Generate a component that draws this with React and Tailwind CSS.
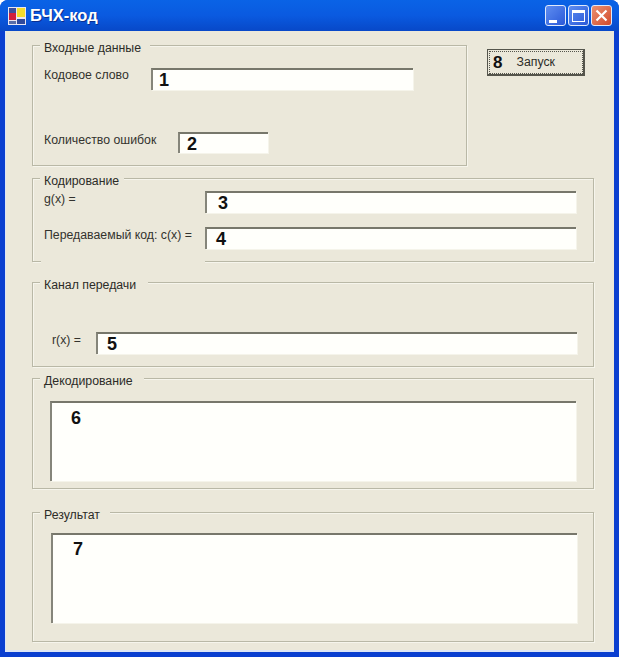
const font = { fontFamily: '"Liberation Sans", Arial, sans-serif' };

function GroupBox({ title, gap, className, children }) {
  return (
    <div className={`relative border border-[#b9b8a6] shadow-[1px_1px_0_#f6f5ec,inset_1px_1px_0_#f6f5ec] ${className}`}>
      <span className="absolute -top-[5px] left-[7px] bg-[#ebe8da] pl-1 text-[12.3px] leading-[15px] text-[#2c2c28]" style={{ width: gap }}>
        {title}
      </span>
      {children}
    </div>
  );
}

function Field({ value, className, numClass }) {
  return (
    <div className={`border-t-2 border-l-2 border-t-[#77776b] border-l-[#85857a] bg-[#fffffb] shadow-[1px_1px_0_#f5f4ea] text-[18px] leading-[20px] font-bold text-[#111] ${className}`}>
      <span className={`block ${numClass}`}>{value}</span>
    </div>
  );
}

function WinButton({ className, children }) {
  return (
    <div className={`flex h-[21px] w-[21px] items-center justify-center rounded-[3px] border border-[#dfe9fb] ${className}`}>
      {children}
    </div>
  );
}

export default function App() {
  return (
    <div className="h-[657px] w-[619px] overflow-hidden bg-white" style={font}>
      <div className="flex h-full flex-col rounded-t-[8px] bg-[#0a3fd0]">
        {/* title bar */}
        <div className="flex h-[31px] shrink-0 items-center rounded-t-[8px] bg-gradient-to-b from-[#0a63e6] via-[#0a5ae0] to-[#0848c8] pr-[7px] pl-[8px]">
          <svg width="18" height="18" viewBox="0 0 18 18" className="shrink-0">
            <rect x="0" y="0" width="18" height="18" fill="#e9e6f2" />
            <rect x="1" y="1" width="7" height="5" fill="#3a4f9c" />
            <rect x="9" y="1" width="8" height="9" fill="#f4dc2c" />
            <rect x="1" y="6" width="7" height="7" fill="#d21f3c" />
            <rect x="1" y="14" width="7" height="3" fill="#5a6ea8" />
            <rect x="9" y="12" width="8" height="5" fill="#2f4a9c" />
          </svg>
          <span className="ml-[4px] text-[16.5px] leading-none font-bold text-white [text-shadow:1px_1px_0_#0a2f90]">БЧХ-код</span>
          <div className="ml-auto flex gap-[2px]">
            <WinButton className="bg-gradient-to-br from-[#5f8df0] to-[#2b58d8]">
              <span className="mt-[11px] mr-[6px] h-[3px] w-[8px] bg-white" />
            </WinButton>
            <WinButton className="bg-gradient-to-br from-[#5f8df0] to-[#2b58d8]">
              <span className="h-[12px] w-[13px] border border-t-[3px] border-white" />
            </WinButton>
            <WinButton className="bg-gradient-to-br from-[#ea9070] to-[#d2492a]">
              <svg width="13" height="13" viewBox="0 0 13 13">
                <path d="M1.5 1.5 11.5 11.5M11.5 1.5 1.5 11.5" stroke="#fff" strokeWidth="2.2" />
              </svg>
            </WinButton>
          </div>
        </div>

        {/* client area */}
        <div className="mx-[5px] mb-[5px] flex flex-1 flex-col border-b-2 border-l border-[#dde6f6] bg-[#ebe8da] pt-[14px] pl-[26px]">
          <div className="flex items-start">
            <GroupBox title="Входные данные" gap={110} className="h-[121px] w-[435px] pt-[22px] pl-[11px]">
              <div className="flex items-start">
                <span className="w-[107px] text-[12.3px] leading-[15px] text-[#33332e]">Кодовое слово</span>
                <Field value="1" className="h-[22px] w-[262px]" numClass="pl-[6px]" />
              </div>
              <div className="mt-[42px] flex items-start">
                <span className="w-[134px] pt-[1px] text-[12.3px] leading-[15px] text-[#33332e]">Количество ошибок</span>
                <Field value="2" className="h-[21px] w-[90px]" numClass="pl-[7px]" />
              </div>
            </GroupBox>
            <button className="mt-[4px] ml-[20px] flex h-[27px] w-[98px] items-center border border-[#55554c] border-r-2 border-b-2 bg-[#ebe8da] pl-[5px] text-left outline-1 -outline-offset-3 outline-[#55554c] outline-dotted">
              <span className="text-[17px] leading-none font-bold text-[#111]">8</span>
              <span className="ml-[14px] text-[12.3px] leading-none text-[#2c2c28]">Запуск</span>
            </button>
          </div>

          <GroupBox title="Кодирование" gap={84} className="mt-[12px] h-[84px] w-[562px] pt-[12px] pl-[11px]">
            <div className="flex items-start">
              <span className="w-[161px] pt-[1px] text-[12.3px] leading-[15px] text-[#33332e]">g(x) =</span>
              <Field value="3" className="h-[22px] w-[371px]" numClass="pl-[11px]" />
            </div>
            <div className="mt-[14px] flex items-start">
              <span className="w-[161px] pt-[1px] text-[12.3px] leading-[15px] text-[#33332e]">Передаваемый код: c(x) =</span>
              <Field value="4" className="h-[22px] w-[371px]" numClass="pl-[9px]" />
            </div>
            <span className="absolute -bottom-[2px] left-[8px] h-[3px] w-[164px] bg-[#ebe8da]" />
          </GroupBox>

          <GroupBox title="Канал передачи" gap={108} className="mt-[20px] h-[85px] w-[562px] pt-[49px] pl-[18px]">
            <div className="flex items-start">
              <span className="w-[45px] pt-[1px] pl-[1px] text-[12.3px] leading-[15px] text-[#33332e]">r(x) =</span>
              <Field value="5" className="h-[22px] w-[481px]" numClass="pl-[9px]" />
            </div>
          </GroupBox>

          <GroupBox title="Декодирование" gap={104} className="mt-[11px] h-[111px] w-[562px] pt-[22px] pl-[17px]">
            <Field value="6" className="h-[80px] w-[526px]" numClass="pt-[5px] pl-[19px]" />
          </GroupBox>

          <GroupBox title="Результат" gap={70} className="mt-[23px] h-[130px] w-[562px] pt-[20px] pl-[18px]">
            <Field value="7" className="h-[90px] w-[526px]" numClass="pt-[4px] pl-[20px]" />
          </GroupBox>
        </div>
      </div>
    </div>
  );
}
